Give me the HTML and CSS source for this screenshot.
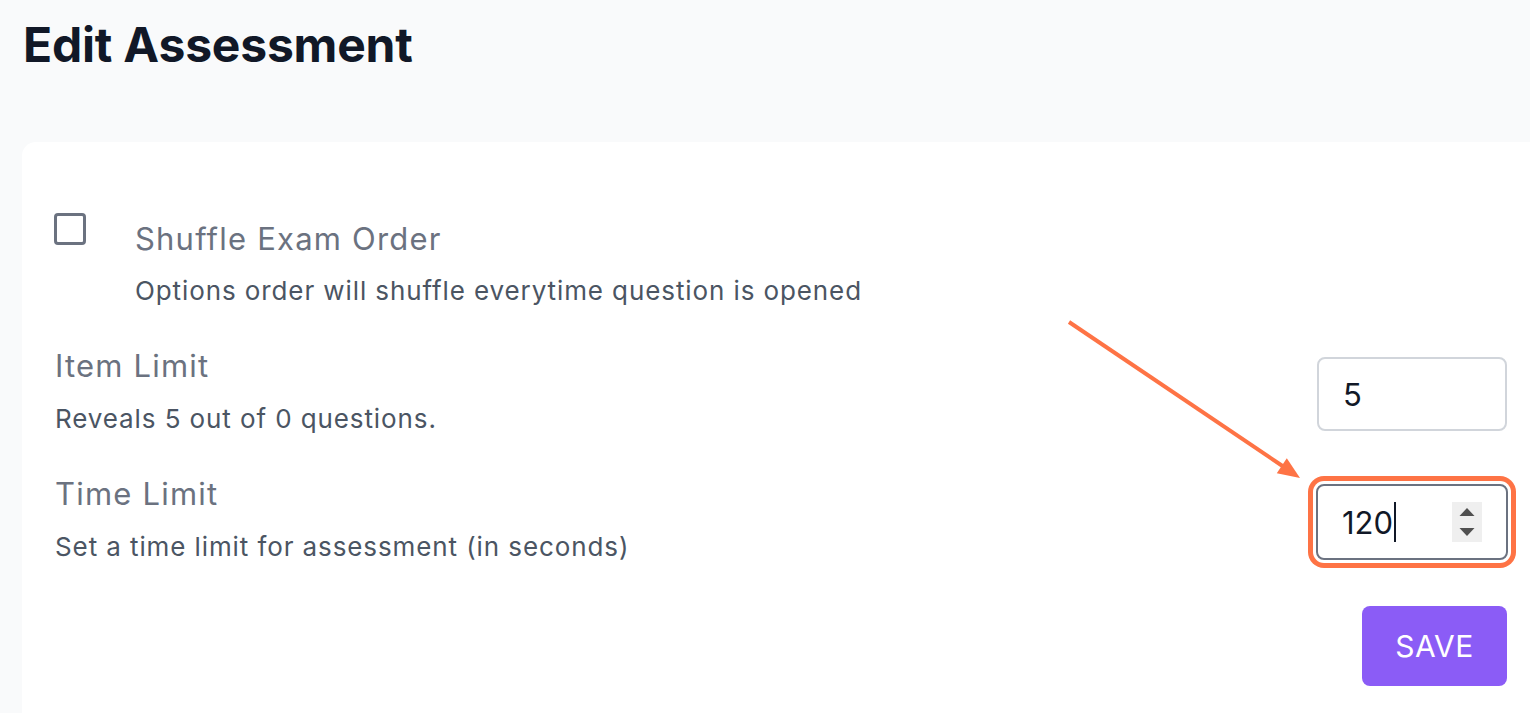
FILE: index.html
```html
<!DOCTYPE html>
<html lang="en">
<head>
<meta charset="utf-8">
<title>Edit Assessment</title>
<link rel="stylesheet" href="styles.css">
</head>
<body>
<div class="page">
  <h1 class="title">Edit Assessment</h1>
  <section class="card">
    <div class="opt-row">
      <span class="checkbox"></span>
      <div class="opt-text">
        <div class="label">Shuffle Exam Order</div>
        <div class="desc desc-opt">Options order will shuffle everytime question is opened</div>
      </div>
    </div>

    <div class="field-row field-item">
      <div class="field-text">
        <div class="label">Item Limit</div>
        <div class="desc desc-field">Reveals 5 out of 0 questions.</div>
      </div>
      <div class="text-input">5</div>
    </div>

    <div class="field-row field-time">
      <div class="field-text">
        <div class="label">Time Limit</div>
        <div class="desc desc-field">Set a time limit for assessment (in seconds)</div>
      </div>
      <div class="text-input focused">
        <span class="val">120</span><span class="caret"></span>
        <span class="spinner">
          <svg width="30" height="40" viewBox="0 0 30 40"><path d="M7.5 14 L15 6 L22.5 14 Z" fill="#505050"/><path d="M7.5 26 L15 34 L22.5 26 Z" fill="#505050"/></svg>
        </span>
      </div>
    </div>

    <div class="actions">
      <button class="save-btn" type="button">SAVE</button>
    </div>
  </section>

  <svg class="annotation" width="1530" height="713" viewBox="0 0 1530 713">
    <line x1="1069" y1="322" x2="1284" y2="467" stroke="#fe7345" stroke-width="4" stroke-linecap="butt"/>
    <polygon points="1300,478 1276.8,473.2 1286.8,458.2" fill="#fe7345"/>
  </svg>
</div>
</body>
</html>
```

FILE: styles.css
```css
html, body {
  margin: 0;
  padding: 0;
}

body {
  background: #f9fafb;
  font-family: Inter, "Noto Sans", "Liberation Sans", sans-serif;
  overflow: hidden;
}

.page {
  position: relative;
  height: 713px;
  overflow: hidden;
}

.title {
  margin: 0;
  padding: 16px 0 0 23px;
  font-size: 48px;
  line-height: 58px;
  font-weight: 700;
  color: #111827;
  letter-spacing: -0.2px;
}

.card {
  margin: 68px -20px 0 22px;
  padding: 72px 43px 60px 32px;
  background: #ffffff;
  border-radius: 14px;
}

.opt-row {
  display: flex;
  align-items: flex-start;
}

.checkbox {
  flex: none;
  box-sizing: border-box;
  width: 32px;
  height: 32px;
  margin-top: -1px;
  border: 3px solid #6b7280;
  border-radius: 4px;
  background: #fff;
}

.opt-text {
  margin-left: 49px;
  margin-top: 6px;
}

.label {
  font-size: 31px;
  line-height: 38px;
  color: #6b7280;
  letter-spacing: 1.2px;
}

.desc {
  font-size: 26px;
  line-height: 32px;
  color: #4b5563;
  letter-spacing: 0.9px;
}

.desc-opt { margin-top: 17px; }
.desc-field { margin-top: 18px; }

.field-row {
  display: flex;
  align-items: flex-start;
  justify-content: space-between;
  padding-left: 1px;
}

.field-item { margin-top: 40px; }
.field-time { margin-top: 40px; }

.text-input {
  box-sizing: border-box;
  width: 190px;
  height: 74px;
  margin-top: 10px;
  border: 2px solid #d1d5db;
  border-radius: 8px;
  padding: 0 24px;
  display: flex;
  align-items: center;
  font-size: 31px;
  color: #111827;
  background: #fff;
}

.text-input.focused {
  width: 192px;
  height: 76px;
  margin-top: 9px;
  margin-right: -1px;
  border-color: #6b7280;
  padding-right: 24px;
  box-shadow: 0 0 0 3px #ffffff, 0 0 0 8px #fe7345;
}

.caret {
  width: 2px;
  height: 40px;
  background: #111827;
  margin-left: 1px;
}

.spinner {
  margin-left: auto;
  width: 30px;
  height: 40px;
  background: #efefef;
  display: flex;
}

.actions {
  display: flex;
  justify-content: flex-end;
  margin-top: 43px;
}

.save-btn {
  width: 145px;
  height: 80px;
  border: none;
  border-radius: 8px;
  background: #8b5cf6;
  color: #ffffff;
  font-family: Inter, "Noto Sans", "Liberation Sans", sans-serif;
  font-size: 30px;
  font-weight: 400;
  letter-spacing: 0.5px;
  padding: 0;
}

.annotation {
  position: absolute;
  left: 0;
  top: 0;
  pointer-events: none;
}
```
